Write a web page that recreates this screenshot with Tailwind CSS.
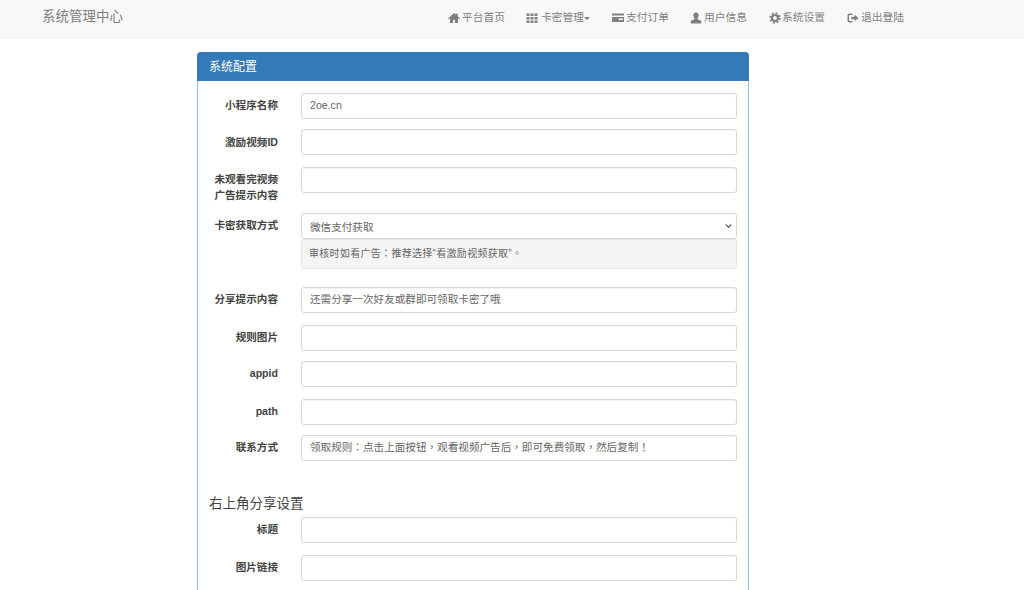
<!DOCTYPE html>
<html lang="zh-CN">

<head>
    <meta charset="UTF-8">
    <meta name="viewport" content="width=device-width, initial-scale=1.0">
    <title>系统配置</title>
    <script src="https://cdn.jsdelivr.net/npm/@tailwindcss/browser@4"></script>
</head>

<body class="bg-white h-[590px] overflow-hidden text-[#444] text-[10.6px] font-['Liberation_Sans','Noto_Sans_CJK_SC',sans-serif]">
    <!-- navbar -->
    <nav class="h-[38px] pb-[2px] bg-[#f8f8f8] border-b border-[#eee] flex items-center text-[#808080] text-[10.75px]">
        <div class="ml-[42px] w-[406px] text-[13.5px]">系统管理中心</div>
        <ul class="flex items-center h-full">
            <li class="w-[78px] flex items-center gap-[2px]">
                <svg class="w-[12px] h-[12px]" viewBox="0 0 12 12" fill="currentColor"><path d="M6 1 0 6.500 .8 7.300 2 6.300V11h3V8h2v3h3V6.300l1.200 1 .8-.8L9.800 3.900V1.500H8.200v1z" /></svg>
                <span>平台首页</span>
            </li>
            <li class="w-[86px] flex items-center gap-[3px]">
                <svg class="w-[12px] h-[12px]" viewBox="0 0 12 12" fill="currentColor"><path d="M.5 1.500h3v2.500h-3zM4.500 1.500h3v2.500h-3zM8.500 1.500h3v2.500h-3zM.5 5h3v2.500h-3zM4.500 5h3v2.500h-3zM8.500 5h3v2.500h-3zM.5 8.500h3V11h-3zM4.500 8.500h3V11h-3zM8.500 8.500h3V11h-3z" /></svg>
                <span>卡密管理</span>
                <span class="-ml-[3px] mt-[2px] w-0 h-0 border-x-[3px] border-x-transparent border-t-[3px] border-t-[#808080]"></span>
            </li>
            <li class="w-[78px] flex items-center gap-[2px]">
                <svg class="w-[12px] h-[12px]" viewBox="0 0 12 12" fill="currentColor"><path fill-rule="evenodd" d="M0 1.500h12v2H0zM0 5h12v5H0zM6.500 6.500v1.500H11V6.500z" /></svg>
                <span>支付订单</span>
            </li>
            <li class="w-[79px] flex items-center gap-[2px]">
                <svg class="w-[12px] h-[12px]" viewBox="0 0 12 12" fill="currentColor"><path d="M6 .5c-1.800 0-2.700 1.300-2.700 3 0 1.200.5 2.200 1.200 2.800v1L.8 8.800V11.500h10.400V8.800L7.500 7.300v-1c.7-.6 1.200-1.600 1.200-2.800 0-1.700-.9-3-2.700-3z" /></svg>
                <span>用户信息</span>
            </li>
            <li class="w-[78px] flex items-center gap-[1px]">
                <svg class="w-[12px] h-[12px]" viewBox="0 0 12 12" fill="none" stroke="currentColor"><circle cx="6" cy="6" r="3" stroke-width="2.200" /><circle cx="6" cy="6" r="4.700" stroke-width="2" stroke-dasharray="1.800 1.890" /></svg>
                <span>系统设置</span>
            </li>
            <li class="flex items-center gap-[2px]">
                <svg class="w-[12px] h-[12px]" viewBox="0 0 12 12" fill="currentColor"><path d="M5.500 1.500H2.500C1.300 1.500.5 2.300.5 3.500v5c0 1.200.8 2 2 2h3V9H3c-.6 0-1-.4-1-1V4c0-.6.4-1 1-1h2.500z" /><path d="M7.500 2.800 11.700 6 7.500 9.200V7.300H4.300V4.700h3.200z" /></svg>
                <span>退出登陆</span>
            </li>
        </ul>
    </nav>

    <!-- panel -->
    <section class="ml-[197px] mt-[14px] w-[552px] border border-[#337ab7]/50 rounded-t-[4px] h-[600px]">
        <h2 class="h-[29px] -mx-px -mt-px bg-[#337ab7] rounded-t-[4px] text-white text-[12px] leading-[30px] pl-[12px]">系统配置</h2>
        <form class="pt-[12px] pr-[11px]">
            <div class="flex h-[26px]">
                <label class="w-[80px] shrink-0 text-right font-bold leading-[24px]">小程序名称</label>
                <input class="ml-[23px] flex-1 border border-[#d9d9d9] rounded-[3px] px-[8px] text-[#666] shadow-[inset_0_1px_1px_rgba(0,0,0,.05)]" value="2oe.cn">
            </div>
            <div class="flex h-[26px] mt-[10px]">
                <label class="w-[80px] shrink-0 text-right font-bold leading-[26px]">激励视频ID</label>
                <input class="ml-[23px] flex-1 border border-[#d9d9d9] rounded-[3px] px-[8px] text-[#666] shadow-[inset_0_1px_1px_rgba(0,0,0,.05)]">
            </div>
            <div class="flex h-[26px] mt-[12px]">
                <label class="w-[80px] shrink-0 text-right font-bold leading-[16px] pt-[4px]">未观看完视频<br>广告提示内容</label>
                <input class="ml-[23px] flex-1 border border-[#d9d9d9] rounded-[3px] px-[8px] text-[#666] shadow-[inset_0_1px_1px_rgba(0,0,0,.05)]">
            </div>
            <div class="flex mt-[20px]">
                <label class="w-[80px] shrink-0 text-right font-bold leading-[25px]">卡密获取方式</label>
                <div class="ml-[23px] flex-1">
                    <div class="relative h-[26px] border border-[#d9d9d9] rounded-[3px] px-[8px] text-[#666] leading-[26px] shadow-[inset_0_1px_1px_rgba(0,0,0,.05)]">微信支付获取
                        <svg class="absolute right-[4px] top-[9px] w-[7px] h-[6px]" viewBox="0 0 7 6" fill="none" stroke="#666" stroke-width="1.300"><path d="M.8 1.500 3.500 4.300 6.200 1.500" /></svg>
                    </div>
                    <div lang="zh-TW" class="h-[30px] bg-[#f5f5f5] border border-[#e3e3e3] rounded-[3px] px-[7px] text-[10px] leading-[28px] text-[#666] tracking-[.3px] font-['Liberation_Sans','Noto_Sans_CJK_TC',sans-serif]">审核时如看广告：推荐选择“看激励视频获取”。</div>
                </div>
            </div>
            <div class="flex h-[26px] mt-[18px]">
                <label class="w-[80px] shrink-0 text-right font-bold leading-[25px]">分享提示内容</label>
                <input class="ml-[23px] flex-1 border border-[#d9d9d9] rounded-[3px] px-[8px] text-[#666] shadow-[inset_0_1px_1px_rgba(0,0,0,.05)]" value="还需分享一次好友或群即可领取卡密了哦">
            </div>
            <div class="flex h-[26px] mt-[12px]">
                <label class="w-[80px] shrink-0 text-right font-bold leading-[24px]">规则图片</label>
                <input class="ml-[23px] flex-1 border border-[#d9d9d9] rounded-[3px] px-[8px] text-[#666] shadow-[inset_0_1px_1px_rgba(0,0,0,.05)]">
            </div>
            <div class="flex h-[26px] mt-[10px]">
                <label class="w-[80px] shrink-0 text-right font-bold leading-[24px]">appid</label>
                <input class="ml-[23px] flex-1 border border-[#d9d9d9] rounded-[3px] px-[8px] text-[#666] shadow-[inset_0_1px_1px_rgba(0,0,0,.05)]">
            </div>
            <div class="flex h-[26px] mt-[12px]">
                <label class="w-[80px] shrink-0 text-right font-bold leading-[24px]">path</label>
                <input class="ml-[23px] flex-1 border border-[#d9d9d9] rounded-[3px] px-[8px] text-[#666] shadow-[inset_0_1px_1px_rgba(0,0,0,.05)]">
            </div>
            <div class="flex h-[26px] mt-[10px]">
                <label class="w-[80px] shrink-0 text-right font-bold leading-[24px]">联系方式</label>
                <input lang="zh-TW" class="ml-[23px] flex-1 border border-[#d9d9d9] rounded-[3px] px-[8px] text-[#666] shadow-[inset_0_1px_1px_rgba(0,0,0,.05)] font-['Liberation_Sans','Noto_Sans_CJK_TC',sans-serif]" value="领取规则：点击上面按钮，观看视频广告后，即可免费领取，然后复制！">
            </div>
            <h3 class="ml-[11px] mt-[33px] text-[13.5px] leading-[20px] text-[#444]">右上角分享设置</h3>
            <div class="flex h-[26px] mt-[3px]">
                <label class="w-[80px] shrink-0 text-right font-bold leading-[24px]">标题</label>
                <input class="ml-[23px] flex-1 border border-[#d9d9d9] rounded-[3px] px-[8px] text-[#666] shadow-[inset_0_1px_1px_rgba(0,0,0,.05)]">
            </div>
            <div class="flex h-[26px] mt-[12px]">
                <label class="w-[80px] shrink-0 text-right font-bold leading-[24px]">图片链接</label>
                <input class="ml-[23px] flex-1 border border-[#d9d9d9] rounded-[3px] px-[8px] text-[#666] shadow-[inset_0_1px_1px_rgba(0,0,0,.05)]">
            </div>
        </form>
    </section>
</body>

</html>
